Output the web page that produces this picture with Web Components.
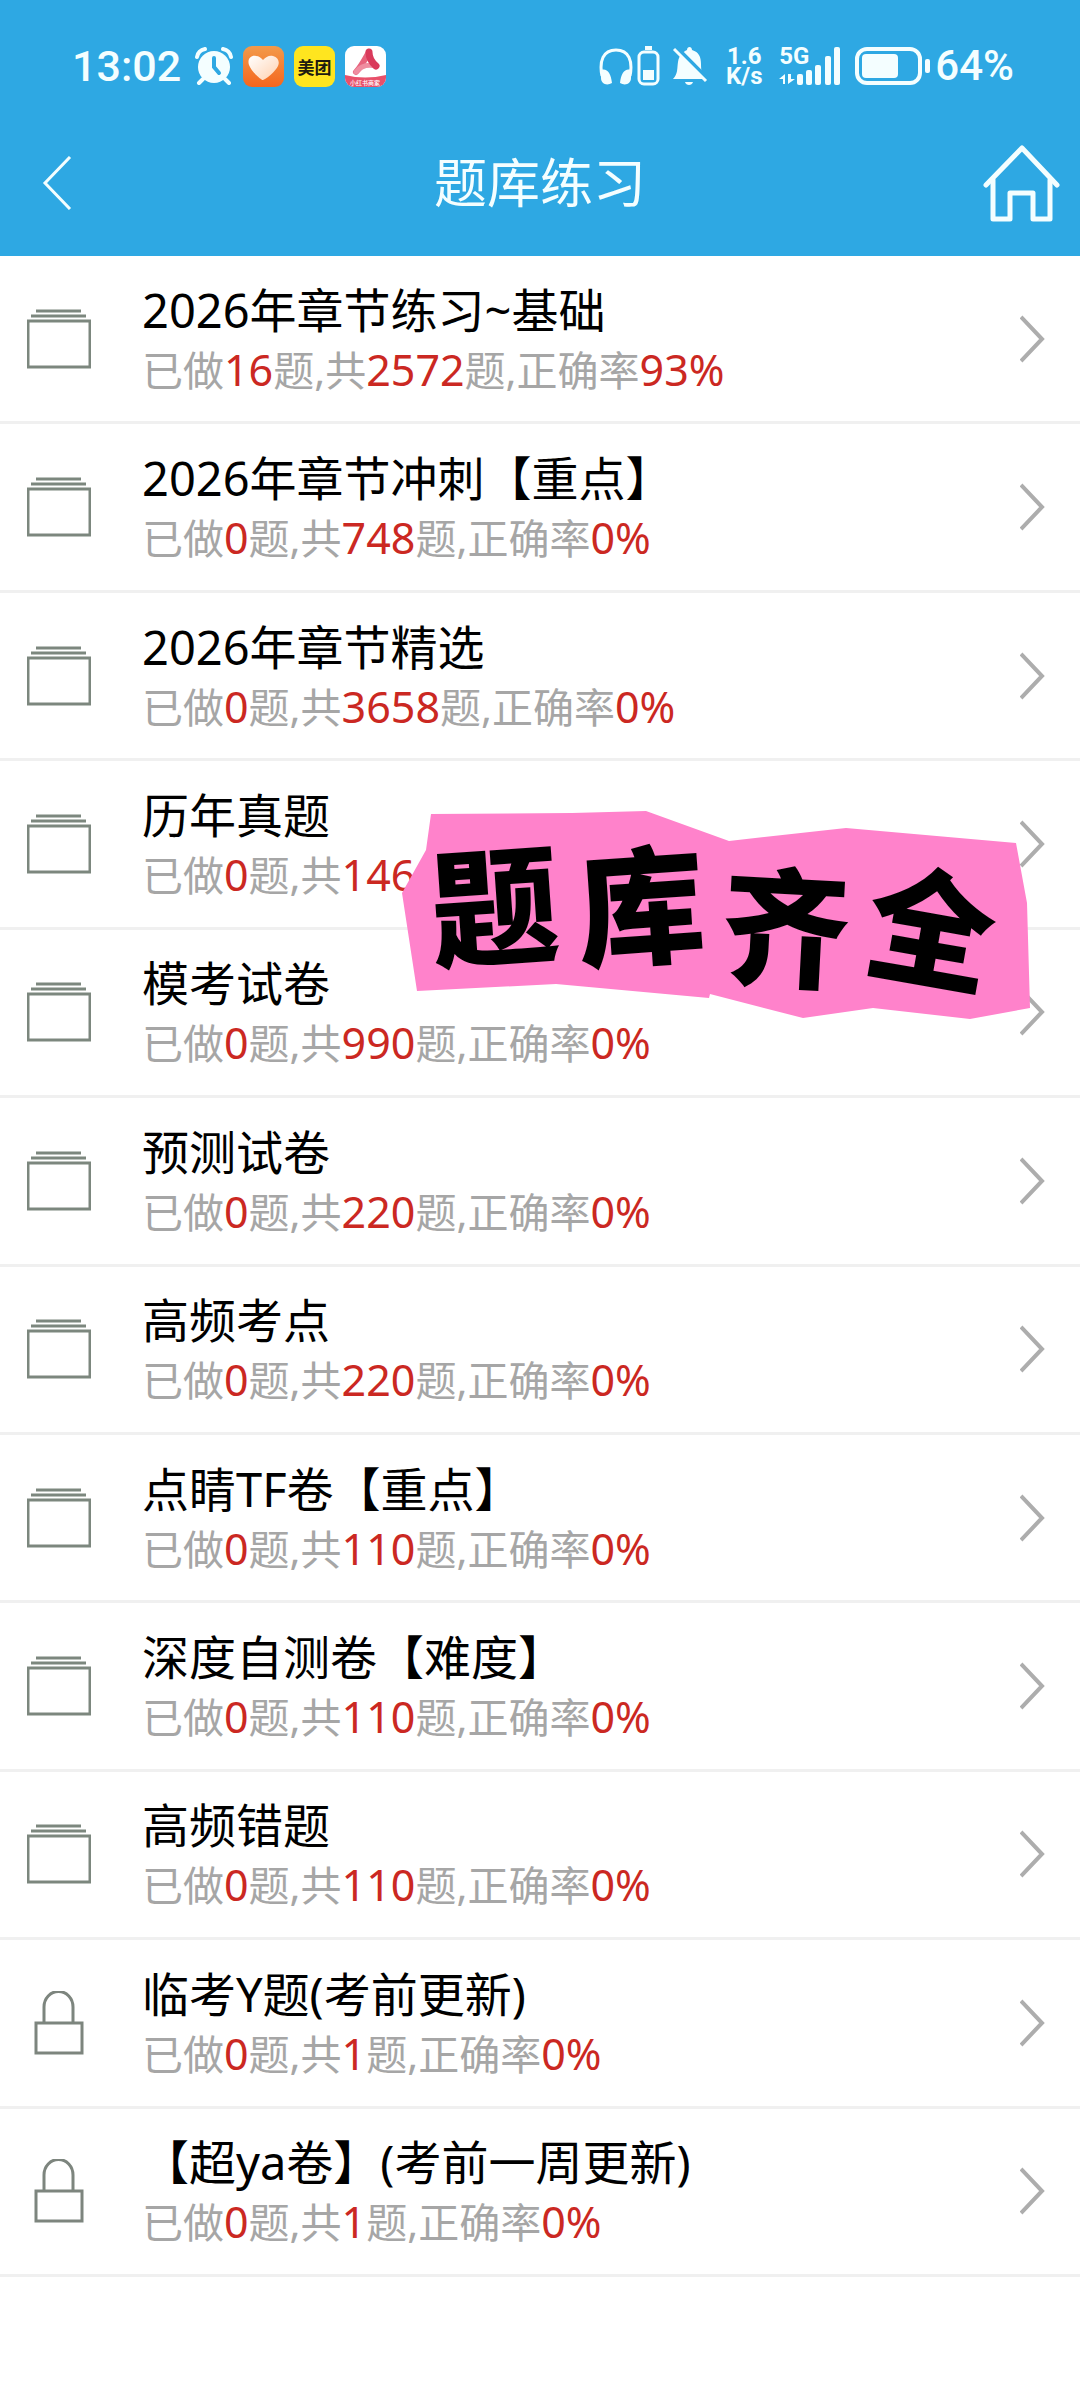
<!DOCTYPE html>
<html lang="zh-CN">
<head>
<meta charset="utf-8">
<meta name="viewport" content="width=device-width, initial-scale=1">
<title>题库练习</title>
<style>
  html, body { margin: 0; }
  body {
    background: #fff;
    font-family: "Noto Sans", "Noto Sans CJK SC", sans-serif;
  }
</style>
</head>
<body>
<practice-page></practice-page>

<script>
const define = (name, html, setup) => {
  const template = document.createElement('template');
  template.innerHTML = html;
  customElements.define(name, class extends HTMLElement {
    connectedCallback() {
      if (this.shadowRoot) return;
      this.attachShadow({ mode: 'open' }).append(template.content.cloneNode(true));
      if (setup) setup(this, this.shadowRoot);
    }
  });
};

define('status-bar', `
<style>
  :host { display: flex; justify-content: space-between; align-items: center; height: 132px; box-sizing: border-box;
    padding: 0 66px 0 72px; color: #f4feff; font-family: Roboto, "Noto Sans CJK SC", sans-serif; font-weight: 500; }
  div { display: flex; align-items: center; }
  .left { gap: 10px; }
  .time, .level { line-height: 48px; }
  .time { font-size: 43px; margin-right: 4px; }
  .level { font-size: 42px; }
  .app { width: 41px; height: 41px; border-radius: 9px; }
  .meituan { background: #ffe51f; color: #201a10; font-size: 17px; font-weight: 700; justify-content: center; }
  svg { display: block; }
  .speed { flex-direction: column; width: 40px; font-size: 24px; line-height: 20px; font-weight: 700; margin: 0 15px 0 16px; }
  .mini { margin: 0 12px 0 4px; }
  .battery { margin: 0 4px 0 14px; }
  .net { flex-direction: column; align-items: stretch; position: relative; }
  .net span { position: absolute; left: 0; top: -1px; font-size: 24px; line-height: 20px; font-weight: 700; }
</style>
<div class="left">
  <span class="time">13:02</span>
  <svg width="38" height="38" viewBox="0 0 38 38" fill="none" stroke="currentColor" stroke-linecap="round">
    <circle cx="19" cy="20" r="16" fill="currentColor" stroke="none"/>
    <path d="M2 10 A 10 10 0 0 1 10 2 M28 2 A 10 10 0 0 1 36 10" stroke-width="4"/>
    <path d="M8 32 L4 36 M30 32 L34 36" stroke-width="4"/>
    <path d="M19 11 V20 L24 26" stroke="#2ea8e3" stroke-width="4"/>
  </svg>
  <svg class="app" viewBox="0 0 41 41">
    <defs><linearGradient id="o" x2="0" y2="1"><stop stop-color="#f39a4a"/><stop offset="1" stop-color="#f4661e"/></linearGradient>
    <linearGradient id="h" x2="1" y2="1"><stop stop-color="#fff"/><stop offset="1" stop-color="#ffd0ae"/></linearGradient></defs>
    <rect width="41" height="41" fill="url(#o)"/>
    <path d="M20 34 C18 34 8 25 6 19 C4 13 8 9 13 10 C16 10 18 12 20 14 C23 11 26 9 30 10 C35 11 37 16 35 20 C33 25 22 34 20 34Z" fill="url(#h)"/>
  </svg>
  <div class="app meituan">美团</div>
  <svg class="app" viewBox="0 0 41 41">
    <rect width="41" height="41" fill="#fff"/>
    <path d="M0 29 Q20 34 41 29 V41 H0Z" fill="#e8506a"/>
    <path d="M11 26 C16 21 20 13 24 6" fill="none" stroke="#e7637d" stroke-width="6" stroke-linecap="round"/>
    <path d="M11 26 Q18 17 31 20" fill="none" stroke="#ef8da0" stroke-width="5" stroke-linecap="round"/>
    <path d="M24 6 Q24 14 31 20" fill="none" stroke="#d93a5b" stroke-width="7" stroke-linecap="round"/>
    <text x="20" y="39" font-size="6" text-anchor="middle" fill="#fff">小红书商家</text>
  </svg>
</div>
<div>
  <svg width="34" height="38" viewBox="0 0 34 38" fill="none" stroke="currentColor">
    <path d="M3 29 C0 14 4 3 17 3 C30 3 34 14 31 29" stroke-width="3"/>
    <path d="M2 23 C8 21 12 26 13 36 C8 39 2 37 2 31Z M32 23 C26 21 22 26 21 36 C26 39 32 37 32 31Z" fill="currentColor" stroke="none"/>
  </svg>
  <svg class="mini" width="23" height="40" viewBox="0 0 23 40" fill="none" stroke="currentColor">
    <rect x="2" y="6" width="19" height="32" rx="5" stroke-width="3"/>
    <path d="M8 2 H15" stroke-width="4"/><rect x="6" y="24" width="11" height="10" fill="currentColor" stroke="none"/>
  </svg>
  <svg width="36" height="40" viewBox="0 0 36 40">
    <path d="M1 33 C6 28 5 22 6 16 C7 9 11 6 15 4 C15 0 20 0 20 4 C27 6 29 11 29 18 C29 25 30 29 33 33Z" fill="currentColor"/>
    <path d="M13 36 H21 C20 40 14 40 13 36Z" fill="currentColor"/>
    <path d="M4 1 L36 33" stroke="#2ea8e3" stroke-width="4"/>
    <path d="M2 3 L34 35" stroke="currentColor" stroke-width="3"/>
  </svg>
  <div class="speed"><span>1.6</span><span>K/s</span></div>
  <div class="net">
    <span>5G</span>
    <svg width="62" height="38" viewBox="0 0 62 38" fill="currentColor">
      <path d="M0 32 L6 27 V37 H4 V32Z M9 27 V37 L16 32 H12 V27Z"/>
      <rect x="18" y="27" width="6" height="11" rx="2"/><rect x="27" y="23" width="6" height="15" rx="2"/>
      <rect x="36" y="18" width="6" height="20" rx="2"/><rect x="46" y="9" width="6" height="29" rx="2"/>
      <rect x="55" y="0" width="6" height="38" rx="2"/>
    </svg>
  </div>
  <svg class="battery" width="76" height="38" viewBox="0 0 76 38" fill="none" stroke="currentColor">
    <rect x="2" y="2" width="63" height="34" rx="10" stroke-width="4"/>
    <rect x="7" y="7" width="36" height="24" rx="4" fill="currentColor" stroke="none"/>
    <rect x="70" y="12" width="5" height="14" rx="2" fill="currentColor" stroke="none"/>
  </svg>
  <span class="level">64%</span>
</div>`);

define('nav-bar', `
<style>
  :host { display: grid; grid-template-columns: 120px 1fr 120px; align-items: center; height: 124px; color: #f4feff; }
  h1 { margin: 0; font-size: 53px; line-height: 64px; font-weight: 400; text-align: center; }
  button, a { display: flex; border: 0; background: none; color: inherit; padding: 0; }
  button { padding-left: 42px; }
  a { justify-content: flex-end; padding-right: 20px; }
  svg { display: block; }
  :host > *, button, h1, a { margin-bottom: 22px; }
</style>
<button type="button" aria-label="返回">
  <svg width="30" height="54" viewBox="0 0 30 54" fill="none" stroke="currentColor" stroke-width="3"><path d="M28 1 L3 27 L28 53"/></svg>
</button>
<h1><slot></slot></h1>
<a href="#" aria-label="首页">
  <svg width="77" height="78" viewBox="0 0 77 78" fill="none" stroke="currentColor" stroke-width="5" stroke-linecap="round" stroke-linejoin="round">
    <path d="M3 41 L39 4 L74 41"/><path d="M10 36 V75 H27 V49 H50 V75 H67 V36"/>
  </svg>
</a>`);

define('row-icon', `
<style>
  :host { display: block; width: 64px; height: 64px; }
  svg { display: none; }
  :host([kind="stack"]) .stack, :host([kind="lock"]) .lock { display: block; }
</style>
<svg class="stack" width="64" height="64" viewBox="0 0 64 64" fill="none" stroke="#7c877e">
  <path d="M9 4 H54" stroke-width="3"/><path d="M4 9 H59" stroke-width="3"/>
  <rect x="1" y="14" width="62" height="46" stroke-width="3"/>
</svg>
<svg class="lock" width="64" height="64" viewBox="0 0 64 64" fill="none" stroke="#7d857e" stroke-width="3">
  <path d="M17 31 V16 A 14 15 0 0 1 46 16 V31"/><rect x="9" y="32" width="46" height="30"/>
</svg>`);

define('practice-row', `
<style>
  :host { display: block; border-bottom: 3px solid #f0f0f0; }
  a { display: flex; align-items: center; height: 100%; min-height: 140px; box-sizing: border-box; padding: 0 34px 0 27px;
    color: #000; text-decoration: none; }
  .text { flex: 1; margin-left: 51px; padding-top: 2px; }
  h2 { margin: 0; font-size: 47px; line-height: 60px; font-weight: 400; }
  p { margin: 0; font-size: 41px; line-height: 60px; color: #a6a6a6; }
  b { font-size: 43px; line-height: 1; font-weight: 400; color: #cb2822; }
  svg { display: block; }
</style>
<a href="#">
  <row-icon></row-icon>
  <div class="text">
    <h2><slot></slot></h2>
    <p></p>
  </div>
  <svg width="26" height="48" viewBox="0 0 26 48" fill="none" stroke="#adadad" stroke-width="4"><path d="M1 2 L22 24 L1 46"/></svg>
</a>`, (host, root) => {
  root.querySelector('row-icon').setAttribute('kind', host.hasAttribute('locked') ? 'lock' : 'stack');
  const p = root.querySelector('p');
  const num = v => { const b = document.createElement('b'); b.textContent = v; return b; };
  p.append('已做', num(host.getAttribute('done')), '题,共', num(host.getAttribute('total')));
  if (host.hasAttribute('rate')) p.append('题,正确率', num(host.getAttribute('rate')));
});

define('paper-sticker', `
<style>
  :host { display: grid; width: 628px; }
  svg, div { grid-area: 1 / 1; }
  svg { display: block; width: 100%; }
  div { display: flex; align-items: flex-start; gap: 18px; padding: 25px 0 0 28px; color: #000;
    font: 900 128px/1 "Noto Sans CJK SC", sans-serif; }
  span { display: block; transform: rotate(-4deg); }
  .low { margin-top: 22px; transform: rotate(3deg); }
  .lean { transform: rotate(10deg); }
</style>
<svg viewBox="0 0 628 208">
  <path fill="#ff82cb" d="M29 3 L170 2 L244 0 L327 30 L444 17 L614 32 L625 92 L628 197 L568 208 L471 197 L401 207 L308 183 L307 187 L154 173 L15 180 L0 82 L24 39Z"/>
</svg>
<div><span>题</span><span>库</span><span class="low">齐</span><span class="low lean">全</span></div>`);

define('practice-page', `
<style>
  :host { display: flex; flex-direction: column; position: relative; min-height: 100vh; }
  header { background: #2ea8e3; }
  main { flex: 1; display: grid; grid-auto-rows: 1fr; margin-bottom: 121px; }
  paper-sticker { position: absolute; top: 811px; right: 50px; pointer-events: none; }
</style>
<header>
  <status-bar></status-bar>
  <nav-bar>题库练习</nav-bar>
</header>
<main>
  <practice-row done="16" total="2572" rate="93%">2026年章节练习~基础</practice-row>
  <practice-row done="0" total="748" rate="0%">2026年章节冲刺【重点】</practice-row>
  <practice-row done="0" total="3658" rate="0%">2026年章节精选</practice-row>
  <practice-row done="0" total="146">历年真题</practice-row>
  <practice-row done="0" total="990" rate="0%">模考试卷</practice-row>
  <practice-row done="0" total="220" rate="0%">预测试卷</practice-row>
  <practice-row done="0" total="220" rate="0%">高频考点</practice-row>
  <practice-row done="0" total="110" rate="0%">点睛TF卷【重点】</practice-row>
  <practice-row done="0" total="110" rate="0%">深度自测卷【难度】</practice-row>
  <practice-row done="0" total="110" rate="0%">高频错题</practice-row>
  <practice-row locked done="0" total="1" rate="0%">临考Y题(考前更新)</practice-row>
  <practice-row locked done="0" total="1" rate="0%">【超ya卷】(考前一周更新)</practice-row>
</main>
<paper-sticker></paper-sticker>`);
</script>
</body>
</html>
